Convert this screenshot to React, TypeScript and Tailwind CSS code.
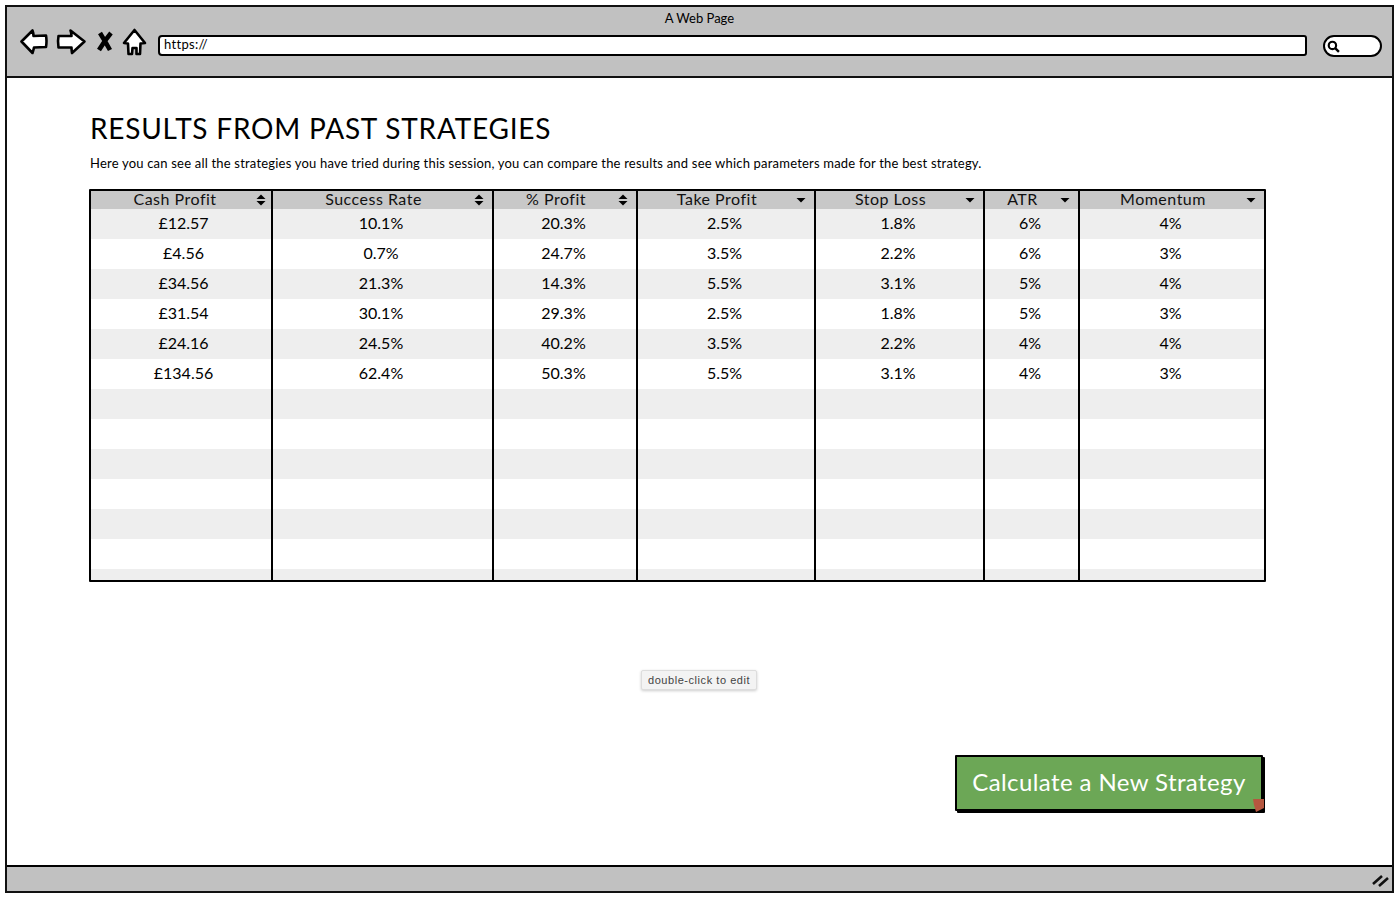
const font = { fontFamily: '"Lato", "Noto Sans", sans-serif' }

interface Column {
  label: string
  width: string
  sort: boolean
}

const columns: Column[] = [
  { label: 'Cash Profit', width: 'w-[182px]', sort: true },
  { label: 'Success Rate', width: 'w-[221px]', sort: true },
  { label: '% Profit', width: 'w-[144px]', sort: true },
  { label: 'Take Profit', width: 'w-[178px]', sort: false },
  { label: 'Stop Loss', width: 'w-[169px]', sort: false },
  { label: 'ATR', width: 'w-[95px]', sort: false },
  { label: 'Momentum', width: 'w-[184px]', sort: false },
]

const rows = [
  ['£12.57', '10.1%', '20.3%', '2.5%', '1.8%', '6%', '4%'],
  ['£4.56', '0.7%', '24.7%', '3.5%', '2.2%', '6%', '3%'],
  ['£34.56', '21.3%', '14.3%', '5.5%', '3.1%', '5%', '4%'],
  ['£31.54', '30.1%', '29.3%', '2.5%', '1.8%', '5%', '3%'],
  ['£24.16', '24.5%', '40.2%', '3.5%', '2.2%', '4%', '4%'],
  ['£134.56', '62.4%', '50.3%', '5.5%', '3.1%', '4%', '3%'],
  ['', '', '', '', '', '', ''],
  ['', '', '', '', '', '', ''],
  ['', '', '', '', '', '', ''],
  ['', '', '', '', '', '', ''],
  ['', '', '', '', '', '', ''],
  ['', '', '', '', '', '', ''],
  ['', '', '', '', '', '', ''],
]

function SortIcon({ both, first }: { both: boolean; first: boolean }) {
  return (
    <svg width="10" height="12" viewBox="0 0 10 12" className={`absolute top-[3px] ${first ? 'right-[5px]' : 'right-[8px]'}`}>
      {both && <path d="M5 0.5 L9.5 5 L0.5 5 Z" fill="#000" />}
      {both ? <path d="M0.5 7 L9.5 7 L5 11.5 Z" fill="#000" /> : <path d="M0.5 4 L9.5 4 L5 8.5 Z" fill="#000" />}
    </svg>
  )
}

function NavIcons() {
  return (
    <div className="-mt-[3px] flex items-center">
      <svg width="130" height="32" viewBox="0 0 130 32" fill="#fff" stroke="#000" strokeWidth="2.6" strokeLinejoin="round">
        <path d="M1.5 15.5 L12.5 4.5 Q13.5 7 13.5 10 L26 9.5 Q27 15 26 21 L14 21.5 Q13.5 24 12.5 27 Z" />
        <path d="M38.5 10 L51.5 10 Q51.5 7 50.5 4.5 L64.5 15.5 L52 27 Q51.5 24 51.5 21.5 L38.5 21.5 Q37.5 15 38.5 10 Z" />
        <path d="M80 7 Q85 15 90 24 M91 7 Q85 14 79 24" strokeWidth="4.6" fill="none" />
        <path d="M104 17 L114.5 4 L125 17 L120.5 17.5 L120 28 L116.5 28 L116.5 22 L112.5 22 L112 28 L108.5 28 L108 17.5 Z" />
      </svg>
    </div>
  )
}

function TopBar() {
  return (
    <div className="flex h-[71px] shrink-0 flex-col border-b-2 border-[#111] bg-[#c1c1c1]">
      <div className="pt-[4px] text-center text-[13px] leading-[15px] text-black">A Web Page</div>
      <div className="flex items-center pl-[13px] pr-[10px] pt-[3px]">
        <NavIcons />
        <div className="ml-[8px] mt-[3px] flex h-[21px] w-[1150px] items-center rounded-l-[4px] rounded-r-[3px] border-2 border-black bg-white pl-[4px] text-[13px] tracking-[0.3px] text-black">
          https://
        </div>
        <div className="relative ml-[16px] mt-[4px] h-[22px] w-[59px] rounded-full border-2 border-black bg-white">
          <svg width="13" height="13" viewBox="0 0 12 12" className="absolute left-[2px] top-[3px]" fill="none" stroke="#000">
            <circle cx="5" cy="5" r="3.4" strokeWidth="2" />
            <path d="M7.5 7.5 L11 11" strokeWidth="2.2" />
          </svg>
        </div>
      </div>
    </div>
  )
}

function ResultsTable() {
  return (
    <div className="h-[393px] w-[1177px] overflow-hidden rounded-[1px] border-2 border-black">
      <div className="flex h-[18px] bg-[#c8c8c8]">
        {columns.map((col, i) => (
          <div
            key={col.label}
            className={`relative h-full text-center text-[16px] leading-[16px] tracking-[0.5px] text-[#111] ${col.width} ${i === 0 ? 'pr-[12px]' : 'pr-[18px]'} ${i < 6 ? 'border-r-2 border-black' : ''}`}
          >
            {col.label}
            <SortIcon both={col.sort} first={i === 0} />
          </div>
        ))}
      </div>
      {rows.map((row, r) => (
        <div key={r} className={`flex h-[30px] ${r % 2 === 0 ? 'bg-[#eeeeee]' : 'bg-white'}`}>
          {row.map((cell, c) => (
            <div
              key={c}
              className={`h-full text-center text-[16px] leading-[28px] text-black ${columns[c].width} ${c === 0 ? 'pl-[5px]' : 'pr-[3px]'} ${c < 6 ? 'border-r-2 border-black' : ''}`}
            >
              {cell}
            </div>
          ))}
        </div>
      ))}
    </div>
  )
}

export default function App() {
  return (
    <div className="relative h-[897px] w-[1398px] overflow-hidden bg-white" style={font}>
      <div className="ml-[5px] mt-[5px] flex h-[888px] w-[1389px] flex-col border-2 border-[#111]">
        <TopBar />
        <main className="flex flex-1 flex-col pl-[82px] pt-[32px]">
          <h1 className="pl-[1px] text-[28px] leading-[36px] tracking-[0.78px] text-black">RESULTS FROM PAST STRATEGIES</h1>
          <p className="mt-[8px] pl-[1px] text-[13px] leading-[18px] tracking-[0.2px] text-black">
            Here you can see all the strategies you have tried during this session, you can compare the results and see which parameters made for the best strategy.
          </p>
          <div className="mt-[17px]">
            <ResultsTable />
          </div>
          <div className="mt-[173px] flex w-[1177px] justify-end">
            <button className="relative mr-[3px] h-[56px] w-[308px] rounded-[1px] border-2 border-black bg-[#6ca756] pb-[2px] text-[24px] tracking-[0.4px] text-white shadow-[2px_2px_0_#000]">
              Calculate a New Strategy
              <svg width="11" height="13" viewBox="0 0 11 13" className="absolute bottom-[-3px] right-[-3px]">
                <path d="M0 0 L11 0 L11 9 L3 13 L1 6 Z" fill="#b5573f" />
              </svg>
            </button>
          </div>
        </main>
        <div className="relative h-[26px] shrink-0 border-t-2 border-black bg-[#c1c1c1]">
          <svg width="18" height="14" viewBox="0 0 18 14" className="absolute right-[2px] top-[7px]" stroke="#111" strokeWidth="2.6">
            <path d="M1 10 L10 2 M7 12 L16 4" />
          </svg>
        </div>
      </div>
      <div className="absolute left-[641px] top-[670px] rounded-[2px] border border-[#dddddd] bg-[#f3f3f3] px-[6px] font-['Liberation_Sans'] text-[11px] leading-[18px] tracking-[0.55px] text-[#444] shadow-[0_1px_3px_rgba(0,0,0,0.2)]">
        double-click to edit
      </div>
    </div>
  )
}
